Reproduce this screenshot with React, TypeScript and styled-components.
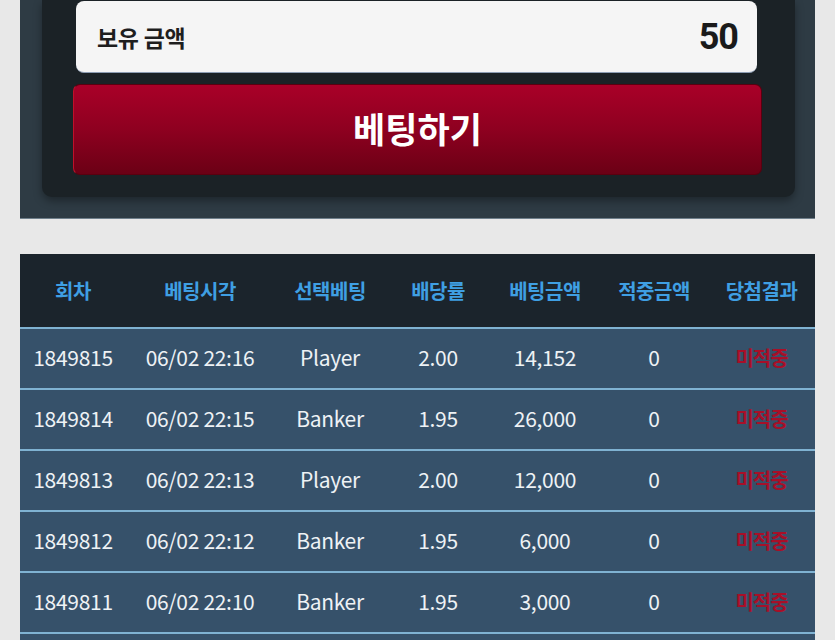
import React from "react";
import styled, { createGlobalStyle } from "styled-components";

const GlobalStyle = createGlobalStyle`
    html, body {
        margin: 0;
        padding: 0;
        background: #e8e8e8;
        font-family: "Noto Sans CJK KR", "Noto Sans", sans-serif;
    }
`;

const Page = styled.div`
    width: 835px;
    height: 640px;
    overflow: hidden;
    padding: 0 20px;
    box-sizing: border-box;
`;

const BetPanel = styled.div`
    background: #2e3b44;
    border-bottom: 1px solid #6f7f8b;
    padding: 0 20px 21px 22px;
`;

const BetInner = styled.div`
    background: #1b2226;
    border-radius: 0 0 10px 10px;
    box-shadow: 0 4px 8px rgba(0, 0, 0, 0.35);
    padding: 1px 33px 22px 31px;
    display: flex;
    flex-direction: column;
    gap: 11px;
`;

const Balance = styled.div`
    height: 72px;
    margin: 0 5px 0 3px;
    box-sizing: border-box;
    background: #f5f5f5;
    border-radius: 8px;
    border-bottom: 1px solid #8d9db3;
    display: flex;
    align-items: center;
    justify-content: space-between;
    padding: 0 19px 0 21px;
`;

const BalanceLabel = styled.span`
    font-size: 23px;
    font-weight: 700;
    color: #1e1e1e;
    letter-spacing: -0.3px;
`;

const BalanceValue = styled.span`
    font-family: Roboto, "Noto Sans", sans-serif;
    font-size: 36px;
    font-weight: 700;
    color: #1a1a1a;
    letter-spacing: -1px;
`;

const BetButton = styled.button`
    height: 91px;
    border: 1px solid #5a000f;
    border-left-color: #c0102a;
    border-radius: 7px;
    background: linear-gradient(to bottom, #a90028 0%, #8e0020 50%, #6b0015 100%);
    color: #ffffff;
    font-family: "Noto Sans CJK KR", sans-serif;
    font-size: 35px;
    font-weight: 700;
    padding: 0 0 4px;
    cursor: pointer;
`;

const Table = styled.div`
    margin-top: 35px;
`;

const cols = "106px 148px 112px 104px 110px 108px 107px";

const HeadRow = styled.div`
    display: grid;
    grid-template-columns: ${cols};
    height: 73px;
    background: #1b242c;
    align-items: center;
`;

const HeadCell = styled.div`
    text-align: center;
    color: #3f9fe3;
    font-size: 20px;
    font-weight: 700;
    letter-spacing: -0.5px;
`;

const Row = styled.div`
    display: grid;
    grid-template-columns: ${cols};
    height: 59px;
    box-sizing: content-box;
    border-top: 2px solid #7fb2d2;
    background: #36516a;
    align-items: center;
    padding-bottom: 0;
`;

const Cell = styled.div<{ $miss?: boolean }>`
    text-align: center;
    margin-bottom: 3px;
    color: ${(p) => (p.$miss ? "#a80f28" : "#eef2f5")};
    font-size: ${(p) => (p.$miss ? "20px" : "21px")};
    font-weight: ${(p) => (p.$miss ? 700 : 400)};
    letter-spacing: ${(p) => (p.$miss ? "-1px" : "-0.3px")};
`;

const heads = ["회차", "베팅시각", "선택베팅", "배당률", "베팅금액", "적중금액", "당첨결과"];

const rows = [
    ["1849815", "06/02 22:16", "Player", "2.00", "14,152", "0"],
    ["1849814", "06/02 22:15", "Banker", "1.95", "26,000", "0"],
    ["1849813", "06/02 22:13", "Player", "2.00", "12,000", "0"],
    ["1849812", "06/02 22:12", "Banker", "1.95", "6,000", "0"],
    ["1849811", "06/02 22:10", "Banker", "1.95", "3,000", "0"],
];

export default function App() {
    return (
        <Page>
            <GlobalStyle />
            <BetPanel>
                <BetInner>
                    <Balance>
                        <BalanceLabel>보유 금액</BalanceLabel>
                        <BalanceValue>50</BalanceValue>
                    </Balance>
                    <BetButton>베팅하기</BetButton>
                </BetInner>
            </BetPanel>

            <Table>
                <HeadRow>
                    {heads.map((h) => (
                        <HeadCell key={h}>{h}</HeadCell>
                    ))}
                </HeadRow>
                {rows.map((r) => (
                    <Row key={r[0]}>
                        {r.map((c, i) => (
                            <Cell key={i}>{c}</Cell>
                        ))}
                        <Cell $miss>미적중</Cell>
                    </Row>
                ))}
                <Row />
            </Table>
        </Page>
    );
}
